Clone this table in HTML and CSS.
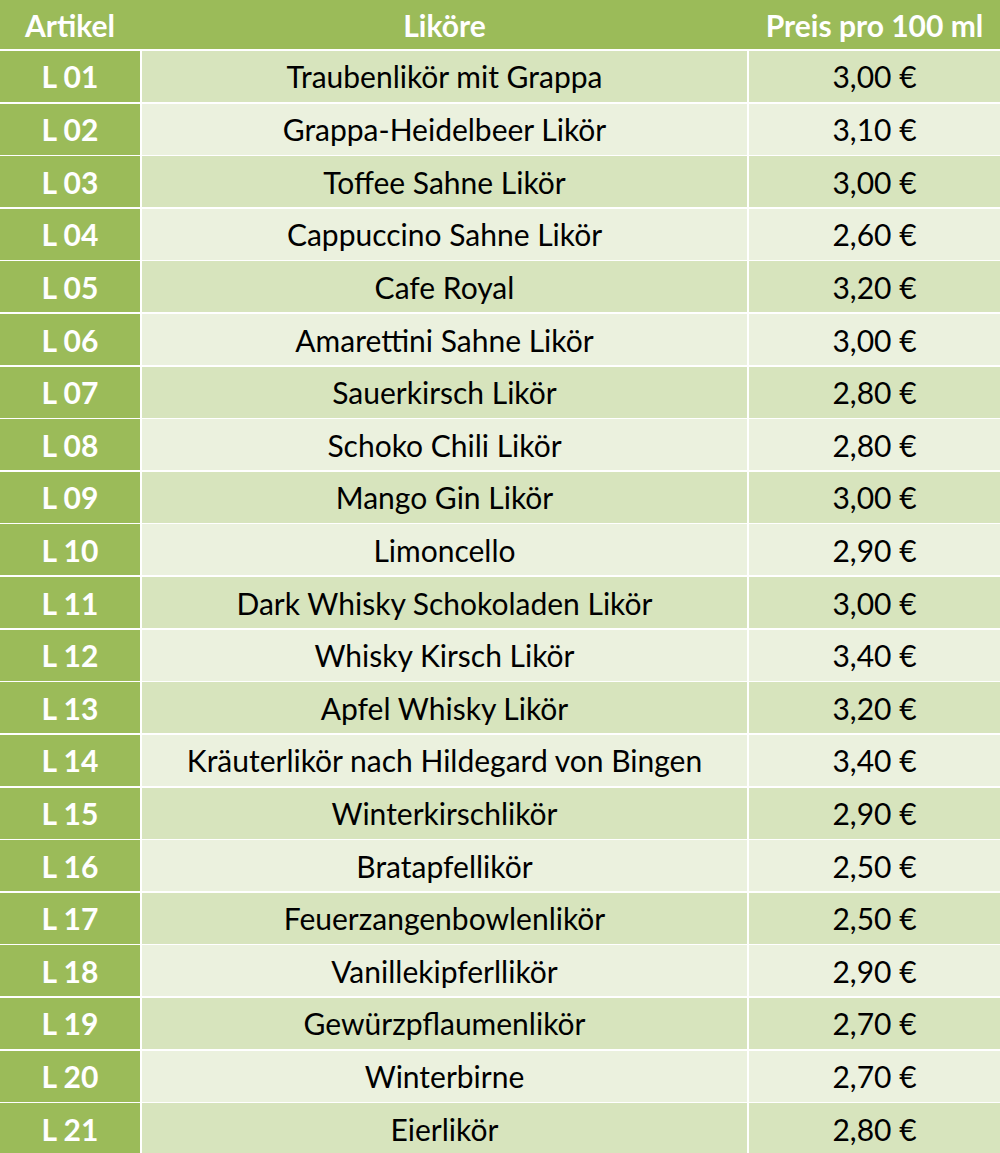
FILE: index.html
```html
<!DOCTYPE html>
<html lang="de">
<head>
<meta charset="utf-8">
<title>Liköre</title>
<link rel="stylesheet" href="styles.css">
</head>
<body>
<div class="table">
  <div class="head">
    <div class="cell">Artikel</div>
    <div class="cell">Liköre</div>
    <div class="cell">Preis pro 100 ml</div>
  </div>
  <div class="row odd"><div class="cell id">L 01</div><div class="cell">Traubenlikör mit Grappa</div><div class="cell">3,00 €</div></div>
  <div class="row even"><div class="cell id">L 02</div><div class="cell">Grappa-Heidelbeer Likör</div><div class="cell">3,10 €</div></div>
  <div class="row odd"><div class="cell id">L 03</div><div class="cell">Toffee Sahne Likör</div><div class="cell">3,00 €</div></div>
  <div class="row even"><div class="cell id">L 04</div><div class="cell">Cappuccino Sahne Likör</div><div class="cell">2,60 €</div></div>
  <div class="row odd"><div class="cell id">L 05</div><div class="cell">Cafe Royal</div><div class="cell">3,20 €</div></div>
  <div class="row even"><div class="cell id">L 06</div><div class="cell">Amarettini Sahne Likör</div><div class="cell">3,00 €</div></div>
  <div class="row odd"><div class="cell id">L 07</div><div class="cell">Sauerkirsch Likör</div><div class="cell">2,80 €</div></div>
  <div class="row even"><div class="cell id">L 08</div><div class="cell">Schoko Chili Likör</div><div class="cell">2,80 €</div></div>
  <div class="row odd"><div class="cell id">L 09</div><div class="cell">Mango Gin Likör</div><div class="cell">3,00 €</div></div>
  <div class="row even"><div class="cell id">L 10</div><div class="cell">Limoncello</div><div class="cell">2,90 €</div></div>
  <div class="row odd"><div class="cell id">L 11</div><div class="cell">Dark Whisky Schokoladen Likör</div><div class="cell">3,00 €</div></div>
  <div class="row even"><div class="cell id">L 12</div><div class="cell">Whisky Kirsch Likör</div><div class="cell">3,40 €</div></div>
  <div class="row odd"><div class="cell id">L 13</div><div class="cell">Apfel Whisky Likör</div><div class="cell">3,20 €</div></div>
  <div class="row even"><div class="cell id">L 14</div><div class="cell">Kräuterlikör nach Hildegard von Bingen</div><div class="cell">3,40 €</div></div>
  <div class="row odd"><div class="cell id">L 15</div><div class="cell">Winterkirschlikör</div><div class="cell">2,90 €</div></div>
  <div class="row even"><div class="cell id">L 16</div><div class="cell">Bratapfellikör</div><div class="cell">2,50 €</div></div>
  <div class="row odd"><div class="cell id">L 17</div><div class="cell">Feuerzangenbowlenlikör</div><div class="cell">2,50 €</div></div>
  <div class="row even"><div class="cell id">L 18</div><div class="cell">Vanillekipferllikör</div><div class="cell">2,90 €</div></div>
  <div class="row odd"><div class="cell id">L 19</div><div class="cell">Gewürzpflaumenlikör</div><div class="cell">2,70 €</div></div>
  <div class="row even"><div class="cell id">L 20</div><div class="cell">Winterbirne</div><div class="cell">2,70 €</div></div>
  <div class="row odd"><div class="cell id">L 21</div><div class="cell">Eierlikör</div><div class="cell">2,80 €</div></div>
</div>
</body>
</html>
```
FILE: styles.css
```css
html, body {
  margin: 0;
  padding: 0;
  background: #ffffff;
}
body {
  font-family: Lato, "Open Sans", "Liberation Sans", sans-serif;
  font-size: 30px;
  color: #000000;
}
.table {
  width: 1000px;
  height: 1153px;
  overflow: hidden;
  display: flex;
  flex-direction: column;
  row-gap: 1.6px;
  background: #ffffff;
}
.head, .row {
  display: grid;
  grid-template-columns: 140px 605.8px 1fr;
  column-gap: 1.6px;
  flex: none;
}
.head {
  height: 49.4px;
  background: #9bbb59;
  color: #ffffff;
  font-weight: 700;
}
.row {
  height: 51.03px;
}
.cell {
  display: flex;
  align-items: center;
  justify-content: center;
  white-space: nowrap;
}
.row.odd .cell {
  background: #d7e4bd;
}
.row.even .cell {
  background: #ebf1de;
}
.row .cell.id {
  background: #9bbb59;
  color: #ffffff;
  font-weight: 700;
}
```
